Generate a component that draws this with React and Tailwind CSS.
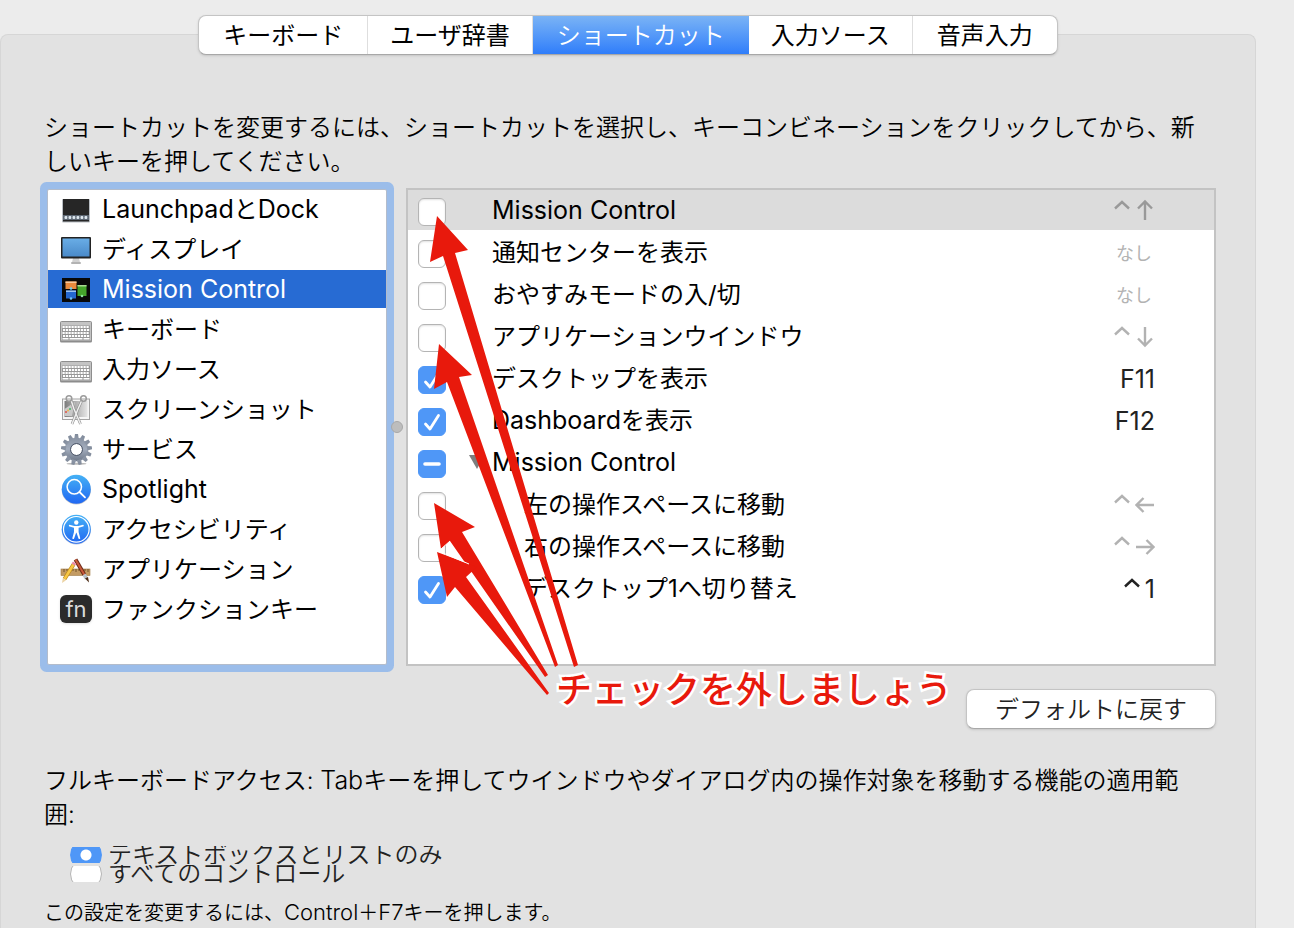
import React, { useEffect, useRef, useState } from 'react';

const TABS = ['キーボード', 'ユーザ辞書', 'ショートカット', '入力ソース', '音声入力'];

const Icon = ({ children }) => (
  <svg viewBox="0 0 32 32" className="size-8 shrink-0" aria-hidden="true">
    {children}
  </svg>
);

const DockIcon = () => (
  <Icon>
    <rect x="2" y="6" width="28" height="23.5" rx="1" fill="#b9bec4" />
    <rect x="3" y="6" width="26" height="22.5" fill="#262626" />
    <rect x="3" y="22" width="26" height="5" fill="#5c6672" />
    {[4, 8, 12, 16, 20, 24].map((x) => (
      <rect key={x} x={x + 0.5} y="23" width="2.8" height="3" rx="1" fill="#dce6ee" />
    ))}
  </Icon>
);

const DisplayIcon = () => (
  <Icon>
    <defs>
      <linearGradient id="screen" x1="0" y1="0" x2="0" y2="1">
        <stop offset="0" stopColor="#69ade6" />
        <stop offset="1" stopColor="#4a8ac9" />
      </linearGradient>
    </defs>
    <path d="M13 25h6l1 4.5h-8z" fill="#d2d2d2" />
    <rect x="11" y="29" width="10" height="2" rx="1" fill="#b3b3b3" />
    <rect x="1" y="4" width="30" height="21.5" rx="1" fill="#222" />
    <rect x="2.5" y="5.5" width="27" height="18" fill="url(#screen)" />
  </Icon>
);

const MissionIcon = () => (
  <Icon>
    <rect x="2" y="5" width="28" height="24" fill="#080808" />
    <rect x="5.5" y="8.5" width="11" height="7.5" fill="#e98a3d" />
    <rect x="5.5" y="8.5" width="11" height="1.5" fill="#f6c89a" />
    <rect x="17.5" y="12" width="9" height="11" fill="#45a52b" />
    <rect x="17.5" y="12" width="9" height="1.5" fill="#a9dc93" />
    <rect x="6" y="17.5" width="10" height="8" fill="#2467cf" />
    <rect x="6" y="17.5" width="10" height="1.5" fill="#9cc3f2" />
    <circle cx="11" cy="15.5" r="1.3" fill="#6fd0ef" />
    <circle cx="22" cy="23" r="1.3" fill="#8be5a0" />
    <circle cx="11" cy="25.5" r="1.3" fill="#6fc2f5" />
  </Icon>
);

const KeyboardIcon = () => (
  <Icon>
    <rect x="0" y="9" width="32" height="20.5" rx="1.5" fill="#8b8b8b" />
    <rect x="0.5" y="8.5" width="31" height="19.5" rx="1" fill="#c4c4c4" stroke="#8e8e8e" />
    <rect x="2" y="12.5" width="28" height="14.5" fill="#989898" />
    {[13, 16, 19, 22].map((y, row) =>
      [0, 1, 2, 3, 4, 5, 6, 7, 8].map((i) => (
        <rect key={`${y}-${i}`} x={2.5 + i * 3 + (row % 2 ? 0.5 : 0)} y={y} width="2.2" height="2" fill="#fff" />
      ))
    )}
    <path d="M2.5 25h6v1.6h-6zM9.5 25h13v1.6h-13zM23.5 25h6v1.6h-6z" fill="#fff" />
  </Icon>
);

const ScreenshotIcon = () => (
  <Icon>
    <defs>
      <linearGradient id="shot" x1="0" y1="0" x2="1" y2="0">
        <stop offset="0" stopColor="#7c7c7c" />
        <stop offset="1" stopColor="#e6e6e6" />
      </linearGradient>
    </defs>
    <rect x="2.5" y="6" width="27" height="20.5" fill="#f6f6f6" stroke="#a4a4a4" />
    <rect x="4.5" y="8" width="23" height="16" fill="url(#shot)" />
    <path d="M4.5 16L15 9l-3 14H4.5z" fill="#c9c9c9" />
    <circle cx="6" cy="19" r="1" fill="#df5046" />
    <circle cx="8" cy="17.5" r="1" fill="#efb44b" />
    <circle cx="10" cy="16" r="1" fill="#49b667" />
    <path d="M11 7l3 9 6.5 15M22 7l-4 9-6 15" fill="none" stroke="#8c8c8c" strokeWidth="2.6" />
    <path d="M11 7l3 9 6.5 15M22 7l-4 9-6 15" fill="none" stroke="#f0f0f0" strokeWidth="1.5" />
    <g fill="none" stroke="#9b9b9b" strokeWidth="1.5">
      <circle cx="9" cy="5.5" r="2.8" />
      <circle cx="23.5" cy="5.5" r="2.8" />
    </g>
  </Icon>
);

const GearIcon = () => (
  <Icon>
    <defs>
      <linearGradient id="gear" x1="0" y1="0" x2="0" y2="32" gradientUnits="userSpaceOnUse">
        <stop offset="0" stopColor="#7f8999" />
        <stop offset="0.5" stopColor="#a3adbd" />
        <stop offset="1" stopColor="#5c6678" />
      </linearGradient>
      <mask id="gearHole">
        <rect width="32" height="32" fill="#fff" />
        <circle cx="16.5" cy="16.5" r="5.5" fill="#000" />
      </mask>
    </defs>
    <ellipse cx="16.5" cy="30.8" rx="10" ry="1" fill="#bbb" />
    <g mask="url(#gearHole)" fill="url(#gear)">
      <circle cx="16.5" cy="16.5" r="11.8" />
      {Array.from({ length: 13 }, (_, i) => (
        <path key={i} d="M14.2 6L15 1h3L18.8 6z" transform={`rotate(${(i * 360) / 13} 16.5 16.5)`} />
      ))}
    </g>
    <circle cx="16.5" cy="16.5" r="6" fill="none" stroke="#4f586a" />
  </Icon>
);

const BlueDefs = ({ id }) => (
  <defs>
    <linearGradient id={id} x1="0" y1="0" x2="0" y2="1">
      <stop offset="0" stopColor="#45b1f5" />
      <stop offset="1" stopColor="#2067f2" />
    </linearGradient>
  </defs>
);

const SpotlightIcon = () => (
  <Icon>
    <BlueDefs id="spot" />
    <circle cx="16.3" cy="17" r="14.6" fill="#c9c9c9" />
    <circle cx="16.3" cy="16.3" r="14.5" fill="url(#spot)" />
    <circle cx="14.3" cy="13.8" r="7.2" fill="none" stroke="#fff" strokeWidth="1.5" />
    <path d="M19.5 19l5.5 5.3" stroke="#fff" strokeWidth="1.8" strokeLinecap="round" />
  </Icon>
);

const AccessibilityIcon = () => (
  <Icon>
    <BlueDefs id="access" />
    <circle cx="16.3" cy="17" r="14.6" fill="#b5c4dd" />
    <circle cx="16.3" cy="16.3" r="14.5" fill="url(#access)" />
    <circle cx="16.3" cy="16.3" r="12.8" fill="none" stroke="#fff" strokeWidth="1.2" />
    <circle cx="16.3" cy="9.5" r="2.2" fill="#fff" />
    <path
      d="M9.6 11.8l4.6 1.2h4.2l4.6-1.2c1 0 1 1.5 0 1.8l-4.4 1.2v4.2l1.7 6.2c0 .9-1.4 1.2-1.8.3l-2-5.7h-.4l-2 5.7c-.4.9-1.8.6-1.8-.3l1.7-6.2v-4.2l-4.4-1.2c-1-.3-1-1.8 0-1.8z"
      fill="#fff"
    />
  </Icon>
);

const AppsIcon = () => (
  <Icon>
    <rect x="1" y="16" width="29" height="6.5" fill="#c39b63" stroke="#a07c49" strokeWidth="0.6" />
    <path d="M4 16v3M7 16v2M10 16v3M13 16v2M16 16v3M19 16v2M22 16v3M25 16v2M28 16v3" stroke="#5c421f" strokeWidth="0.8" />
    <path d="M15.5 6.5l9 15.500" stroke="#6b2a17" strokeWidth="4" />
    <path d="M15.5 6.5l9 15.500" stroke="#c9593a" strokeWidth="2" />
    <path d="M24 21.5l2.5 4" stroke="#b9c2c8" strokeWidth="3.6" />
    <path d="M25 25.5l3-1.5 1 5.5z" fill="#4d2b15" />
    <path d="M13.5 11.5L4.5 26" stroke="#b98718" strokeWidth="4" />
    <path d="M13.5 11.5L4.5 26" stroke="#f8c745" strokeWidth="2.6" />
    <path d="M14.6 9.7l-1.3 2" stroke="#e889a5" strokeWidth="4" />
    <path d="M2.8 25.3l3.2 1.9L2 30z" fill="#ecd3a4" />
  </Icon>
);

const FnIcon = () => (
  <span className="flex h-7 w-8 shrink-0 items-center justify-center rounded-md bg-[#2b2b2b] text-[22px] leading-none text-[#dcdcdc] shadow-sm">
    fn
  </span>
);

const CATEGORIES = [
  { name: 'LaunchpadとDock', icon: DockIcon },
  { name: 'ディスプレイ', icon: DisplayIcon },
  { name: 'Mission Control', icon: MissionIcon },
  { name: 'キーボード', icon: KeyboardIcon },
  { name: '入力ソース', icon: KeyboardIcon },
  { name: 'スクリーンショット', icon: ScreenshotIcon },
  { name: 'サービス', icon: GearIcon },
  { name: 'Spotlight', icon: SpotlightIcon },
  { name: 'アクセシビリティ', icon: AccessibilityIcon },
  { name: 'アプリケーション', icon: AppsIcon },
  { name: 'ファンクションキー', icon: FnIcon },
];

const SHORTCUTS = [
  { id: 'mc', name: 'Mission Control', keys: ['^', 'up'], state: 'off' },
  { id: 'notify', name: '通知センターを表示', keys: [], state: 'off' },
  { id: 'dnd', name: 'おやすみモードの入/切', keys: [], state: 'off' },
  { id: 'windows', name: 'アプリケーションウインドウ', keys: ['^', 'down'], state: 'off' },
  { id: 'desktop', name: 'デスクトップを表示', keys: ['F11'], state: 'on' },
  { id: 'dashboard', name: 'Dashboardを表示', keys: ['F12'], state: 'on' },
  { id: 'group', name: 'Mission Control', keys: null, state: 'mixed' },
  { id: 'left', name: '左の操作スペースに移動', keys: ['^', 'left'], state: 'off', child: true },
  { id: 'right', name: '右の操作スペースに移動', keys: ['^', 'right'], state: 'off', child: true },
  { id: 'desk1', name: 'デスクトップ1へ切り替え', keys: ['^', '1'], state: 'on', child: true },
];

const KEY_PATHS = {
  '^': 'M2 9.5l7-6.5 7 6.5',
  up: 'M10 21V3M3 9.5l7-7 7 7',
  down: 'M10 2v18M3 13.5l7 7 7-7',
  left: 'M19 12H1.5M8.5 5l-7 7 7 7',
  right: 'M1 12h17.5M11.5 5l7 7-7 7',
};

// Latin runs are set slightly larger than the kana and kanji around them
const Mixed = ({ text, latin = 'text-[25px] leading-none' }) =>
  text.split(/([A-Za-z][A-Za-z0-9 ]*)/).map((part, i) =>
    i % 2 ? (
      <span key={i} className={latin}>
        {part}
      </span>
    ) : (
      part
    )
  );

const Keys = ({ keys, on }) => {
  if (!keys) return null;
  if (!keys.length) return <span className="block pt-0.5 pr-[3px] text-lg leading-9 text-[#b3b3b3]">なし</span>;
  return (
    <span className={`flex items-center justify-end gap-0.5 text-[25px] leading-9 ${on ? 'text-[#222]' : 'text-black/30'}`}>
      {keys.map((key) =>
        KEY_PATHS[key] ? (
          <svg key={key} viewBox="0 0 20 24" className="h-6 w-5" fill="none" stroke="currentColor" strokeWidth="2.4" role="img" aria-label={key}>
            <path d={KEY_PATHS[key]} />
          </svg>
        ) : (
          <span key={key}>{key}</span>
        )
      )}
    </span>
  );
};

const Checkbox = ({ id, state, onChange }) => {
  const ref = useRef(null);

  useEffect(() => {
    ref.current.indeterminate = state === 'mixed';
  }, [state]);

  return (
    <span className="grid size-7">
      <input
        ref={ref}
        id={id}
        type="checkbox"
        checked={state === 'on'}
        onChange={onChange}
        className="size-7 appearance-none rounded-md border border-[#b4b4b4] bg-white shadow-[inset_0_1px_2px_rgba(0,0,0,0.12)] [grid-area:1/1] checked:border-[#4f97f7] checked:bg-[#4f97f7] checked:shadow-none indeterminate:border-[#4f97f7] indeterminate:bg-[#4f97f7] indeterminate:shadow-none"
      />
      {state !== 'off' && (
        <svg viewBox="0 0 28 28" className="pointer-events-none size-7 [grid-area:1/1]" fill="none" stroke="#fff" strokeLinecap="round" strokeLinejoin="round">
          {state === 'on' ? <path d="M7.5 16l4.5 5L20.5 7.5" strokeWidth="2.8" /> : <path d="M7 14h14" strokeWidth="3.6" />}
        </svg>
      )}
    </span>
  );
};

const Arrows = () => (
  <svg viewBox="400 200 190 500" className="pointer-events-none absolute top-3 left-[353px] h-[500px] w-[190px]" fill="#e8190c" aria-hidden="true">
    <path d="M437 216L468 250 455 253 578 665 574 667 443 256 430 262z" />
    <path d="M439 344L472 375 459 377 558 665 555 667 447 382 434 389z" />
    <path d="M434 503L475 527 462 532 548 675 545 677 450 541 441 549z" />
    <path d="M437 552L477 567 466 577 549 693 547 695 455 587 447 597z" />
    <path d="M441 549l9-8M438 551l31 13" stroke="#fff" strokeWidth="1" fill="none" />
  </svg>
);

export default function App() {
  const [tab, setTab] = useState('ショートカット');
  const [category, setCategory] = useState('Mission Control');
  const [rows, setRows] = useState(SHORTCUTS);
  const [access, setAccess] = useState('text');

  const toggle = (id) => {
    setRows(rows.map((r) => (r.id === id ? { ...r, state: r.state === 'on' ? 'off' : 'on' } : r)));
  };

  return (
    <main lang="ja" className="flex min-h-screen flex-col bg-[#ececec] pt-[15px] pr-[38px] font-['Inter','Noto_Sans_CJK_JP',sans-serif] text-2xl text-black">
      <nav className="relative z-10 flex h-10 self-center overflow-hidden rounded-lg border border-[#c4c4c4] border-b-[#a8a8a8] bg-white shadow-sm">
        {TABS.map((name) => (
          <button
            key={name}
            type="button"
            onClick={() => setTab(name)}
            className={
              tab === name
                ? 'bg-linear-to-b from-[#7ab3f5] to-[#2f7dfa] px-6 pt-0.5 leading-none font-[350] whitespace-nowrap text-white'
                : 'border-r border-[#dedede] px-[22px] pt-0.5 leading-none whitespace-nowrap first:px-6 last:border-r-0 last:px-6'
            }
          >
            {name}
          </button>
        ))}
      </nav>

      <section className="-mt-[21px] flex-1 rounded-t-lg border border-b-0 border-[#d6d6d6] bg-[#e2e2e2] pt-[76px] pr-[39px] pl-10">
        <p className="px-[3px] leading-[34px] font-[350]">
          ショートカットを変更するには、ショートカットを選択し、キーコンビネーションをクリックしてから、新しいキーを押してください。
        </p>

        <div className="relative mt-[9px] ml-[6px] flex">
          <ul className="my-px w-[340px] shrink-0 rounded-xs border border-[#b3bccb] bg-white ring-7 ring-[#9bbdea]">
            {CATEGORIES.map(({ name, icon: CategoryIcon }) => (
              <li key={name} className="pb-0.5">
                <button
                  type="button"
                  onClick={() => setCategory(name)}
                  className={`flex h-[38px] w-full items-center gap-[10px] pl-3 text-left ${category === name ? 'bg-[#276bd3] text-white' : ''}`}
                >
                  <CategoryIcon />
                  <span className="pt-px leading-9">
                    <Mixed text={name} />
                  </span>
                </button>
              </li>
            ))}
          </ul>

          <div className="z-10 flex w-[19px] shrink-0 items-center justify-center">
            <span className="size-3 rounded-full border border-[#a8a8a8] bg-[#bdbdbd]" />
          </div>

          <div className="min-h-[478px] flex-1 border-2 border-[#c3c3c3] bg-white">
            <table className="w-full border-separate border-spacing-0">
              <tbody>
                {rows.map((row, i) => (
                  <tr key={row.id} className={i === 0 ? 'bg-[#dcdcdc]' : ''}>
                    <td className="h-[42px] w-[58px] border-b-2 border-white pt-1 pl-[10px]">
                      <Checkbox id={row.id} state={row.state} onChange={() => toggle(row.id)} />
                    </td>
                    <td className="w-[26px] border-b-2 border-white">
                      {row.state === 'mixed' && (
                        <button type="button" aria-label={row.name} className="block pl-[3px]">
                          <svg viewBox="0 0 16 14" className="h-[14px] w-4" fill="#7d7d7d">
                            <path d="M0 0h16L8 14z" />
                          </svg>
                        </button>
                      )}
                    </td>
                    <td className={`border-b-2 border-white pt-0.5 leading-9 ${row.child ? 'pl-8' : ''}`}>
                      <label htmlFor={row.id}>
                        <Mixed text={row.name} />
                      </label>
                    </td>
                    <td className="w-40 border-b-2 border-white pt-0.5 pr-[59px] text-right">
                      <Keys keys={row.keys} on={row.state === 'on'} />
                    </td>
                  </tr>
                ))}
              </tbody>
            </table>
          </div>

          <Arrows />
          <p className="absolute top-[478px] left-[509px] text-4xl leading-[48px] font-medium whitespace-nowrap text-[#e8190c] [-webkit-text-stroke:5px_white] [paint-order:stroke_fill]">
            チェックを外しましょう
          </p>
        </div>

        <div className="mt-[23px] flex justify-end">
          <button type="button" className="h-10 rounded-lg border border-[#c4c4c4] border-b-[#a8a8a8] bg-white px-7 pt-0.5 leading-none font-[350] whitespace-nowrap text-[#222] shadow-sm">
            デフォルトに戻す
          </button>
        </div>

        <p className="mt-[35px] pr-3 pl-[3px] leading-[34px] font-[350]">
          <Mixed text="フルキーボードアクセス: Tabキーを押してウインドウやダイアログ内の操作対象を移動する機能の適用範囲:" />
        </p>

        <div className="mt-[14px] flex flex-col gap-px pl-[29px] font-[350] text-[#222]">
          {[
            ['text', 'テキストボックスとリストのみ'],
            ['all', 'すべてのコントロール'],
          ].map(([value, text]) => (
            <label key={value} className="flex h-[18px] items-center gap-[6px] overflow-hidden">
              <span className="flex h-4 w-8 shrink-0 items-center overflow-hidden">
                <input
                  type="radio"
                  name="access"
                  value={value}
                  checked={access === value}
                  onChange={() => setAccess(value)}
                  className="size-8 shrink-0 appearance-none rounded-full border border-[#b4b4b4] bg-white checked:border-[#4f97f7] checked:bg-[radial-gradient(circle,#fff_5px,#4f97f7_6px)]"
                />
              </span>
              <span className="leading-[18px]">{text}</span>
            </label>
          ))}
        </div>

        <p className="mt-4 px-[3px] text-xl leading-7 font-[350]">
          <Mixed text="この設定を変更するには、Control＋F7キーを押します。" latin="text-[22px] leading-none" />
        </p>
      </section>
    </main>
  );
}
